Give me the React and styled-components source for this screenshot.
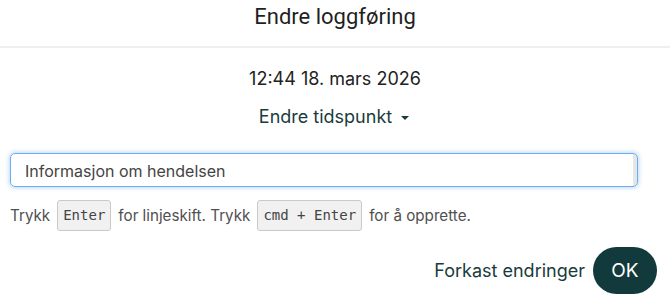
import React from "react";
import styled, { createGlobalStyle } from "styled-components";

const Global = createGlobalStyle`
  html, body { margin: 0; padding: 0; background: #fff; }
  body { font-family: Inter, "Noto Sans", sans-serif; }
  * { box-sizing: border-box; }
`;

const Dialog = styled.div`
  width: 670px;
  height: 307px;
  display: flex;
  flex-direction: column;
  overflow: hidden;
`;

const Header = styled.header`
  height: 48px;
  border-bottom: 2px solid #efefef;
  display: flex;
  align-items: center;
  justify-content: center;
  padding-bottom: 12px;
`;

const Title = styled.h1`
  margin: 0;
  font-family: Roboto, "Liberation Sans", sans-serif;
  font-weight: 400;
  font-size: 22px;
  color: #1f1f1f;
  line-height: 1;
`;

const Body = styled.div`
  display: flex;
  flex-direction: column;
  padding: 0 32px 0 10px;
`;

const Time = styled.div`
  margin-top: 20px;
  text-align: center;
  font-size: 18px;
  line-height: 22px;
  color: #222;
  padding-left: 22px;
`;

const ChangeTime = styled.button`
  align-self: center;
  margin: 16px 0 0 20px;
  border: 0;
  background: none;
  padding: 0;
  display: flex;
  align-items: center;
  gap: 9px;
  font-family: Inter, sans-serif;
  font-size: 18px;
  line-height: 22px;
  color: #1a3b3c;
  cursor: pointer;
`;

const Caret = styled.span`
  width: 0;
  height: 0;
  border-left: 4px solid transparent;
  border-right: 4px solid transparent;
  border-top: 4px solid #1a3b3c;
  margin-top: 2px;
`;

const Field = styled.textarea`
  margin-top: 25px;
  width: 628px;
  height: 34px;
  resize: none;
  border: 1px solid #6aaef0;
  border-radius: 5px;
  box-shadow: 0 0 4px 1px rgba(110, 170, 240, 0.45);
  padding: 7px 14px;
  font-family: Inter, sans-serif;
  font-size: 16px;
  line-height: 20px;
  color: #333;
  outline: none;
  overflow: hidden;
  background: linear-gradient(to left, #e6e6e6 0, #e6e6e6 4px, #fff 4px);
  &::placeholder { color: #444; }
`;

const Hint = styled.p`
  margin: 13px 0 0;
  display: flex;
  align-items: center;
  gap: 7px;
  font-size: 15.2px;
  color: #505050;
  line-height: 31px;
`;

const Key = styled.kbd`
  display: inline-flex;
  align-items: center;
  height: 31px;
  padding: 0 5px;
  background: #f1f1f1;
  border: 1px solid #c9c9c9;
  border-radius: 3px;
  font-family: "DejaVu Sans Mono", "Liberation Mono", monospace;
  font-size: 14px;
  color: #444;
`;

const Footer = styled.div`
  margin-top: 16px;
  display: flex;
  justify-content: flex-end;
  align-items: center;
  gap: 8px;
  padding-right: 13px;
`;

const TextButton = styled.button`
  border: 0;
  background: none;
  padding: 0;
  font-family: Inter, sans-serif;
  font-size: 18px;
  color: #1a3b3c;
  cursor: pointer;
`;

const PrimaryButton = styled.button`
  width: 64px;
  height: 47px;
  border: 0;
  border-radius: 24px;
  background: #12393b;
  color: #fff;
  font-family: Inter, sans-serif;
  font-size: 19px;
  cursor: pointer;
`;

export default function App() {
  return (
    <Dialog>
      <Global />
      <Header>
        <Title>Endre loggføring</Title>
      </Header>
      <Body>
        <Time>12:44 18. mars 2026</Time>
        <ChangeTime>
          Endre tidspunkt <Caret />
        </ChangeTime>
        <Field placeholder="Informasjon om hendelsen" />
        <Hint>
          Trykk <Key>Enter</Key> for linjeskift. Trykk <Key>cmd + Enter</Key> for å opprette.
        </Hint>
      </Body>
      <Footer>
        <TextButton>Forkast endringer</TextButton>
        <PrimaryButton>OK</PrimaryButton>
      </Footer>
    </Dialog>
  );
}
